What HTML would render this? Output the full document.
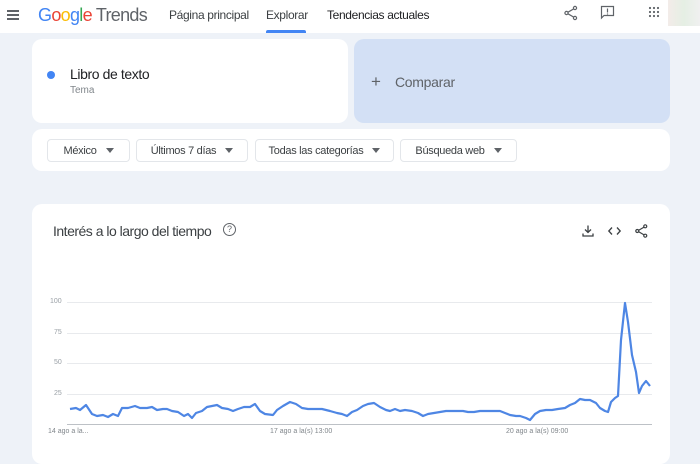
<!DOCTYPE html>
<html><head><meta charset="utf-8"><style>
*{margin:0;padding:0;box-sizing:border-box}
body{width:700px;height:442px;overflow:hidden;background:#eef2f8;font-family:"Liberation Sans",sans-serif;position:relative;color:#202124}
.hdr{position:absolute;left:0;top:0;width:700px;height:33px;background:#fff}
.abs{position:absolute}
.card{position:absolute;background:#fff;border-radius:10px}
.chip{position:absolute;top:139px;height:23px;border:1px solid #e3e6ea;border-radius:4px;font-size:11px;letter-spacing:-0.3px;color:#3c4043;display:flex;align-items:center;justify-content:center;gap:9px}
.chip:after{content:"";border-left:4px solid transparent;border-right:4px solid transparent;border-top:5px solid #5f6368}
.yl{position:absolute;left:50px;font-size:7px;color:#9aa0a6}
.gl{position:absolute;left:67px;width:585px;height:1px;background:#e8eaed}
.xl{position:absolute;top:428px;font-size:7px;color:#80868b}
.nav{position:absolute;top:8px;font-size:12px;letter-spacing:-0.35px}
</style></head><body>
<div class="hdr"></div>
<div class="abs" style="left:7px;top:10px;width:12px;height:2px;background:#5f6368;box-shadow:0 4px 0 #5f6368,0 8px 0 #5f6368"></div>
<div class="abs" style="left:38px;top:5px;font-size:18px;letter-spacing:-0.7px"><span style="color:#4285f4">G</span><span style="color:#ea4335">o</span><span style="color:#fbbc05">o</span><span style="color:#4285f4">g</span><span style="color:#34a853">l</span><span style="color:#ea4335">e</span><span style="color:#5f6368"> Trends</span></div>
<div class="nav" style="left:169px;color:#3c4043">Página principal</div>
<div class="nav" style="left:266px;color:#3c4043">Explorar</div>
<div class="abs" style="left:266px;top:30px;width:40px;height:3px;background:#4285f4;border-radius:2px 2px 0 0"></div>
<div class="nav" style="left:327px;color:#202124">Tendencias actuales</div>
<svg class="abs" style="left:563px;top:5px" width="16" height="16" viewBox="0 0 16 16" fill="none" stroke="#5f6368" stroke-width="1.2"><circle cx="12" cy="3" r="1.6"/><circle cx="3.5" cy="8" r="1.6"/><circle cx="12" cy="13" r="1.6"/><path d="M5 7.2L10.5 4M5 8.8l5.5 3.2"/></svg>
<svg class="abs" style="left:600px;top:5px" width="15" height="15" viewBox="0 0 15 15" fill="none" stroke="#5f6368" stroke-width="1.2"><path d="M1.5 1.5h12v9H4l-2.5 2.5z"/><path d="M7.5 3.5v4M7.5 8.5v1"/></svg>
<svg class="abs" style="left:648px;top:6px" width="12" height="12" viewBox="0 0 12 12" fill="#5f6368"><circle cx="2" cy="2" r="1.1"/><circle cx="6" cy="2" r="1.1"/><circle cx="10" cy="2" r="1.1"/><circle cx="2" cy="6" r="1.1"/><circle cx="6" cy="6" r="1.1"/><circle cx="10" cy="6" r="1.1"/><circle cx="2" cy="10" r="1.1"/><circle cx="6" cy="10" r="1.1"/><circle cx="10" cy="10" r="1.1"/></svg>
<div class="abs" style="left:668px;top:0;width:32px;height:26px;background:linear-gradient(90deg,#f3ece9,#e5efe4,#f0f0f0)"></div>

<div class="card" style="left:32px;top:39px;width:316px;height:84px"></div>
<div class="abs" style="left:47px;top:71px;width:8px;height:8px;border-radius:50%;background:#4285f4"></div>
<div class="abs" style="left:70px;top:66px;font-size:14px;letter-spacing:-0.4px">Libro de texto</div>
<div class="abs" style="left:70px;top:85px;font-size:10px;color:#80868b">Tema</div>
<div class="card" style="left:354px;top:39px;width:316px;height:84px;background:#d3e0f5"></div>
<div class="abs" style="left:371px;top:72px;font-size:17px;color:#5f6368">+</div>
<div class="abs" style="left:395px;top:74px;font-size:14px;letter-spacing:-0.3px;color:#5f6368">Comparar</div>

<div class="card" style="left:32px;top:129px;width:638px;height:42px"></div>
<div class="chip" style="left:47px;width:83px">México</div>
<div class="chip" style="left:136px;width:112px">Últimos 7 días</div>
<div class="chip" style="left:255px;width:139px">Todas las categorías</div>
<div class="chip" style="left:400px;width:117px">Búsqueda web</div>

<div class="card" style="left:32px;top:204px;width:638px;height:260px"></div>
<div class="abs" style="left:53px;top:223px;font-size:14px;letter-spacing:-0.5px;color:#3c4043">Interés a lo largo del tiempo</div>
<div class="abs" style="left:223px;top:223px;width:13px;height:13px;border:1.2px solid #5f6368;border-radius:50%;font-size:9px;color:#5f6368;text-align:center;line-height:11px">?</div>
<svg class="abs" style="left:581px;top:224px" width="14" height="14" viewBox="0 0 14 14" fill="none" stroke="#3c4043" stroke-width="1.3"><path d="M7 1.5v7M4 5.5l3 3 3-3M2 9.5v2.5h10V9.5"/></svg>
<svg class="abs" style="left:607px;top:224px" width="15" height="14" viewBox="0 0 15 14" fill="none" stroke="#3c4043" stroke-width="1.3"><path d="M5 3.5L1.8 7 5 10.5M10 3.5L13.2 7 10 10.5"/></svg>
<svg class="abs" style="left:634px;top:223px" width="15" height="16" viewBox="0 0 16 16" fill="none" stroke="#3c4043" stroke-width="1.3"><circle cx="12" cy="3" r="1.6"/><circle cx="3.5" cy="8" r="1.6"/><circle cx="12" cy="13" r="1.6"/><path d="M5 7.2L10.5 4M5 8.8l5.5 3.2"/></svg>

<div class="gl" style="top:302px"></div><div class="gl" style="top:333px"></div><div class="gl" style="top:363px"></div><div class="gl" style="top:394px"></div>
<div class="abs" style="left:67px;top:424px;width:585px;height:1px;background:#bdc1c6"></div>
<div class="yl" style="top:298px">100</div><div class="yl" style="top:329px;left:54px">75</div><div class="yl" style="top:359px;left:54px">50</div><div class="yl" style="top:390px;left:54px">25</div>
<div class="xl" style="left:48px">14 ago a la...</div>
<div class="xl" style="left:270px">17 ago a la(s) 13:00</div>
<div class="xl" style="left:506px">20 ago a la(s) 09:00</div>
<svg class="abs" style="left:0;top:0" width="700" height="442"><polyline fill="none" stroke="#4e86e4" stroke-width="2.2" stroke-linejoin="round" points="70,409 76,408 80,410 86,405 92,414 97,416 103,415 108,417 113,414 118,416 122,408 128,408 135,406 140,408 147,408 152,407 157,410 163,409 167,409 172,411 178,412 184,416 188,414 192,418 196,413 202,411 207,407 212,406 217,405 222,408 228,409 233,411 238,409 244,407 250,407 255,404 260,411 265,414 273,415 277,410 283,406 290,402 296,404 302,408 308,409 315,409 322,409 330,411 337,413 342,414 347,416 352,412 357,410 363,406 368,404 374,403 380,407 386,410 390,411 395,409 400,411 405,410 412,411 418,413 423,416 428,414 434,413 440,412 446,411 452,411 458,411 463,411 468,412 474,412 480,411 486,411 492,411 500,411 505,413 510,415 516,416 520,416 526,418 530,420 535,414 540,411 546,410 552,410 558,409 565,408 570,405 575,403 580,399 585,400 590,400 596,403 600,408 605,411 608,412 611,402 615,398 618,396 621,340 625,303 628,322 632,355 636,372 639,393 642,386 646,381 650,386"/></svg>
</body></html>
